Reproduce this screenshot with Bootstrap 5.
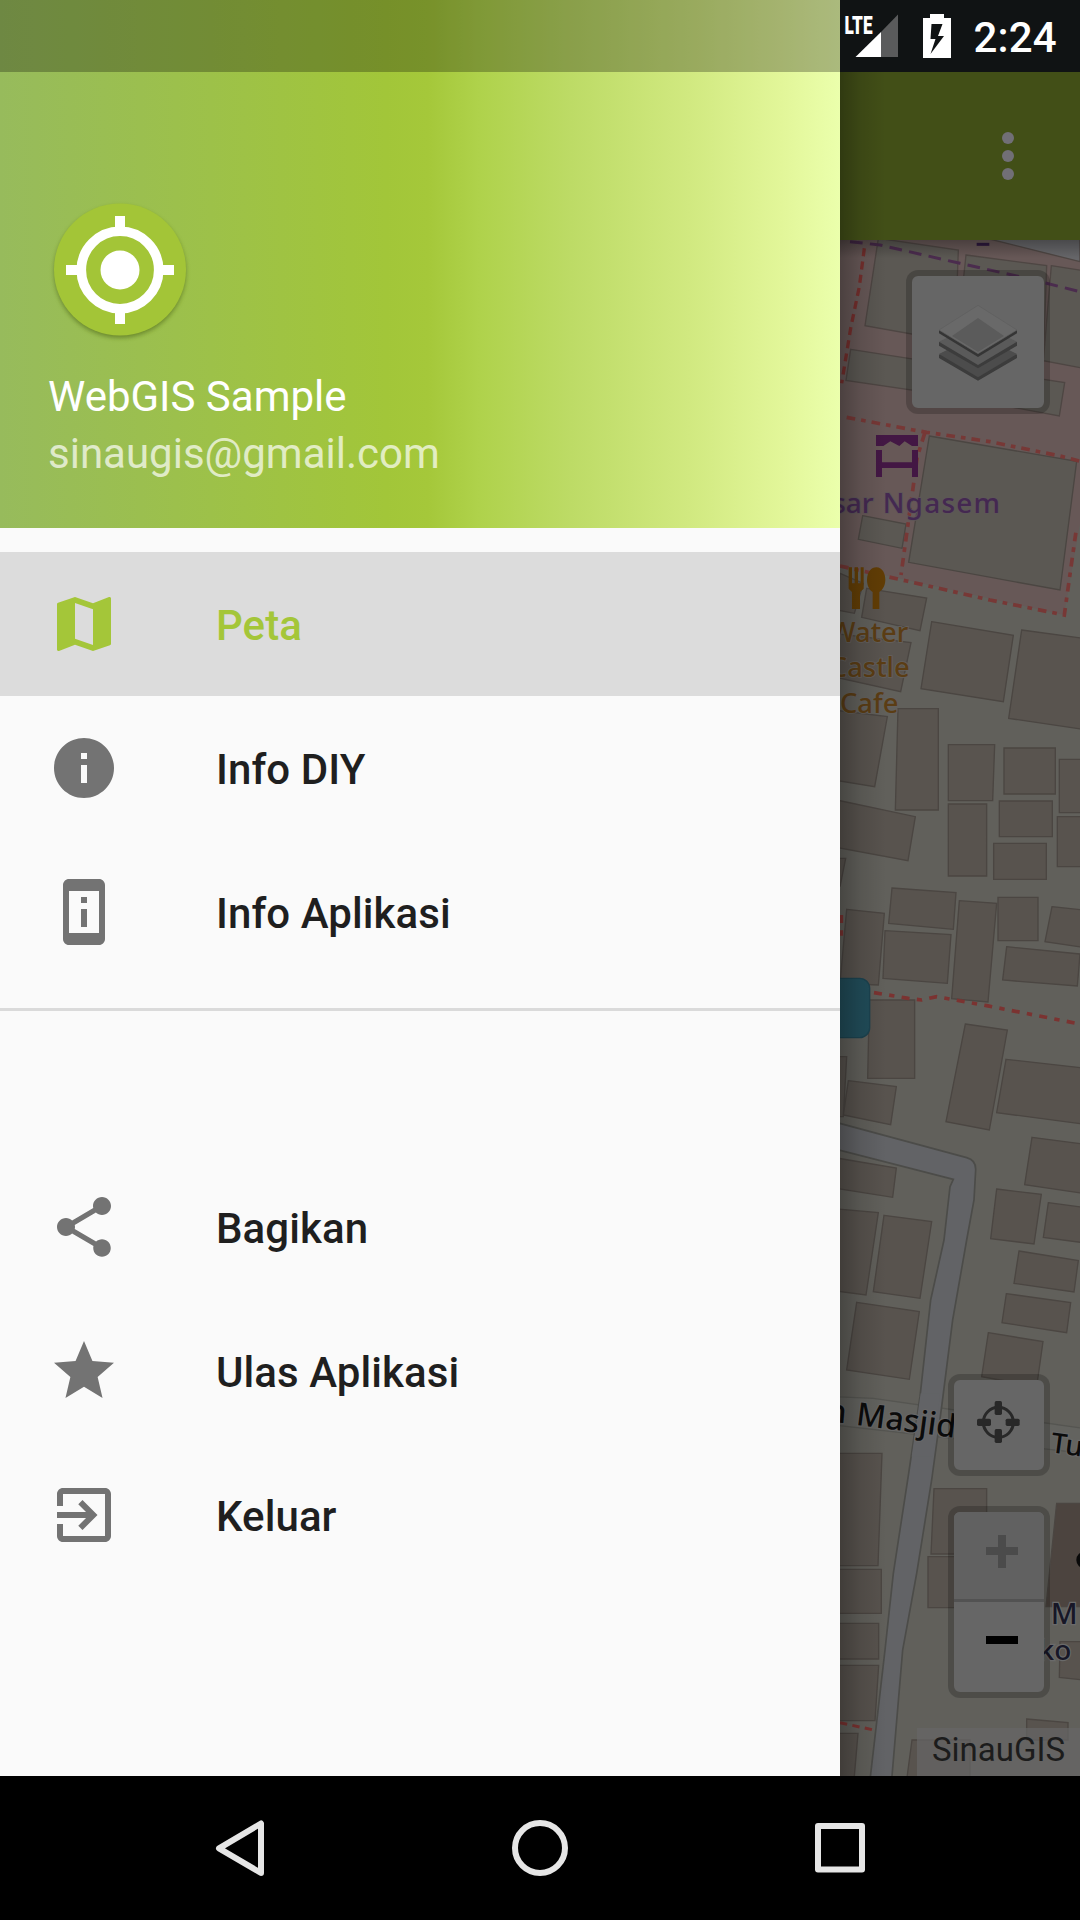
<!DOCTYPE html>
<html lang="id">
<head>
<meta charset="utf-8">
<meta name="viewport" content="width=device-width, initial-scale=1">
<title>WebGIS Sample</title>
<link href="https://cdn.jsdelivr.net/npm/bootstrap@5.3.0/dist/css/bootstrap.min.css" rel="stylesheet">
<style>
  body { font-family: Roboto, "Liberation Sans", sans-serif; background: #000; }
  .phone { width: 1080px; height: 1920px; }
  .stage { height: 1776px; }
  .statusbar { height: 72px; background: #101314; }
  .statusbar svg { width: 240px; height: 72px; }
  .toolbar-app { height: 168px; background: #424f17; }
  .toolbar-app svg { width: 144px; height: 168px; }
  .map-svg { width: 1080px; height: 1536px; }
  .drawer { width: 840px; height: 1776px; background: #fafafa; }
  .drawer-shade { left: 840px; top: 72px; width: 46px; height: 1704px;
    background: linear-gradient(90deg, rgba(0,0,0,.27), rgba(0,0,0,.1) 45%, rgba(0,0,0,0)); }
  .drawer-head { height: 528px; padding: 0 48px 46px;
    background: linear-gradient(90deg, #97bb5c 0, #a2c639 46%, #a5c83a 51%, #afd24b 57%, #bddb66 68%, #d1e980 82%, #e2f699 93%, #ebffac 100%); }
  .drawer-status { height: 72px; background: rgba(0,0,0,.27); }
  .logo-app { width: 144px; height: 144px; }
  .acct-lines { padding-top: 24px; }
  .acct { font-size: 42px; line-height: 57px; color: #fff; }
  .acct-mail { color: rgba(255,255,255,.7); }
  .menu-item { height: 144px; padding: 0 48px; gap: 96px; font-size: 42px; font-weight: 500; color: #1f1f1f; }
  .menu-item span { padding-top: 2px; letter-spacing: .08px; }
  .menu-item svg { width: 72px; height: 72px; fill: #737373; }
  .menu-item.active { background: #dcdcdc; color: #a4c639; }
  .menu-item.active svg { fill: #a4c639; }
  .menu-rule { height: 3px; margin: 24px 0 144px; background: #dadada; }
  .map-ctl { right: 30px; border: 6px solid rgba(0,0,0,.2); border-radius: 12px; background: #666; background-clip: padding-box; }
  .ctl-layers { top: 30px; width: 144px; height: 144px; }
  .ctl-locate { top: 1134px; width: 102px; height: 102px; }
  .ctl-zoom { top: 1266px; width: 102px; height: 192px; }
  .zoom-in { height: 90px; border-bottom: 3px solid #525252; background: #616161; border-radius: 6px 6px 0 0; }
  .attrib { right: 0; bottom: 0; height: 48px; padding: 0 15px; font-size: 33px; line-height: 43px; color: #1c1c1c; background: rgba(102,102,102,.7); }
  .navkeys { height: 144px; background: #000; }
</style>
</head>
<body>
<div class="phone d-flex flex-column overflow-hidden">
  <div class="stage position-relative overflow-hidden d-flex flex-column">
    <div class="statusbar d-flex justify-content-end flex-shrink-0">
      <svg viewBox="840 0 240 72">
        <text x="844.500" y="33.500" font-size="26.500" font-weight="900" fill="#fff" textLength="28" lengthAdjust="spacingAndGlyphs">LTE</text>
        <path d="M898 14.500V57h-17V32z" fill="#5a5b5c"/>
        <path d="M881 32v25h-25.500z" fill="#fff"/>
        <path fill="#fff" fill-rule="evenodd" d="M923 18h7v-4h14v4h7v40h-28zM931.500 24l-1 15h5l-5 15 13.500-18h-6l4.500-12z"/>
        <text x="973.500" y="51.700" font-size="42" font-weight="500" fill="#fff" textLength="83">2:24</text>
      </svg>
    </div>
    <div class="toolbar-app d-flex justify-content-end flex-shrink-0">
      <svg viewBox="936 72 144 168" fill="#716f76"><circle cx="1008" cy="138" r="6"/><circle cx="1008" cy="156" r="6"/><circle cx="1008" cy="174" r="6"/></svg>
    </div>
    <div class="position-relative">
      <svg class="map-svg d-block" viewBox="0 240 1080 1536">
        <defs>
          <linearGradient id="barShade" x1="0" y1="0" x2="0" y2="1"><stop offset="0" stop-opacity=".28"/><stop offset="1" stop-opacity="0"/></linearGradient>
        </defs>
        <rect y="240" width="1080" height="1536" fill="#61605b"/>
        <!-- market area -->
        <path d="M830 240H1080V524L1064 615 830 563z" fill="#675857"/>
        <g transform="translate(830 0) scale(.33333)" fill="#5b5853" stroke="#4e4643" stroke-width="4">
          <path d="M470 715L750 785V715z" fill="#666669"/>
          <path d="M145 715L385 750 375 1025 105 977z"/>
          <path d="M408 765L650 797 640 1085 380 1030z"/>
          <path d="M664 797L760 812V1105L640 1082z"/>
          <path d="M62 1048L704 1148 688 1248 380 1190 48 1141z"/>
          <g fill="none" stroke-width="7">
            <path d="M60 725L150 735 390 790 570 830 750 875" stroke="#4b2c4e" stroke-dasharray="38 22" stroke-width="9"/>
            <path d="M103 745L88 860 62 985 35 1150" stroke="#752f2d" stroke-dasharray="24 16" stroke-width="10"/>
            <path d="M440 733H478" stroke="#2d183d" stroke-width="9"/>
          </g>
        </g>
        <g transform="translate(830 400) scale(.33333)" fill="#59544f" stroke="#4b4642" stroke-width="4">
          <path d="M298 108L740 184 690 570 236 487z" fill="#5b5853"/>
          <path d="M98 347L228 372 216 445 85 418z" fill="#5b5853"/>
          <path d="M30 520L100 550 73 640 20 630z"/>
          <path d="M110 565L290 594 270 692 95 652z"/>
          <path d="M10 700L243 728 212 875 10 830z"/>
          <path d="M305 665L550 706 520 905 273 866z"/>
          <path d="M575 690L760 715V988L536 955z"/>
          <path d="M10 930L172 950 134 1160 10 1140z"/>
          <path d="M204 926H325V1230H196z"/>
          <path d="M355 1034H494L488 1202H355zM522 1044H676V1182H522zM688 1078H760V1238H688z"/>
          <g fill="none" stroke="#773836" stroke-width="11" stroke-dasharray="26 18 14 18">
            <path d="M50 52L250 90 290 97 480 125 690 168 755 185"/>
            <path d="M284 100L262 170 213 525"/>
            <path d="M30 498L230 543 480 600 703 645 740 380"/>
          </g>
          <path d="M138 105H264V138H246L224 124 208 138 181 124 160 138H138zM138 150H156V187H246V150H264V231H246V204H156V231H138z" fill="#431744" stroke="none"/>
          <path d="M56 502h10v48h8v-48h10v48h8v-48h9v64l-11 10v51H66v-51l-10-10zM139 502C158 502 166 522 166 539 166 561 154 571 148 576V627H128V576C117 569 111 555 111 539 112 515 124 502 139 502z" fill="#613d05" stroke="none"/>
          <g stroke="#64615f" stroke-width="5" paint-order="stroke" text-anchor="end" font-family="Noto Sans, Open Sans, sans-serif" font-size="84" font-weight="500">
            <g fill="#442851" stroke="#5d5659"><text x="131" y="340">Pasar</text><text x="510" y="340" textLength="352">Ngasem</text></g>
            <g fill="#5b3d14" font-size="82"><text x="235" y="725">Water</text><text x="239" y="832">Castle</text><text x="205" y="940">Cafe</text></g>
          </g>
        </g>
        <g transform="translate(830 800) scale(.33333)" fill="#58534e" stroke="#4b4642" stroke-width="4">
          <path d="M20 0L256 50 234 182 20 142zM20 175H47L30 260z"/>
          <path d="M355 12H470V228H355zM508 3H667V110H508zM491 130H649V238H491zM682 50H760V200H682z"/>
          <path d="M186 264L378 278 370 388 176 370zM165 392L363 404 352 550 159 535zM388 302L500 310 474 606 365 596z"/>
          <path d="M504 292H624V422H504zM666 320L760 330V442L645 425zM530 440L750 462 742 558 518 540z"/>
          <path d="M50 328L163 340 145 555 30 550zM118 600H254V835H113z"/>
          <path d="M406 672L532 690 478 990 348 965zM528 778L760 804V972L500 938z"/>
          <path d="M20 770H50L40 950H20zM55 842L199 860 182 974 40 945z"/>
          <path d="M606 1012L760 1032V1180L584 1154zM20 1074L199 1104 188 1192 20 1165z"/>
          <g fill="none" stroke="#7b3331" stroke-width="11" stroke-dasharray="24 22 16 22">
            <path d="M132 578L235 595 275 600 320 590 470 617 750 672"/><path d="M34 345V410"/>
          </g>
          <rect x="-60" y="535" width="179" height="178" rx="30" fill="#214d5a" stroke="#1c4350"/>
        </g>
        <g transform="translate(830 1180) scale(.33333)" fill="#58534e" stroke="#4b4642" stroke-width="4">
          <path d="M10 650L130 655 760 745V820L10 735z" fill="#63635f" stroke="#555551"/>
          <!-- lane running down from the upper left -->
          <path d="M10 -175L410 -67Q438 -60 437 -30L432 60 410 180 368 420 335 680 305 900 260 1180 218 1410 185 1800H120L165 1410 190 1180 236 880 270 650 302 360 342 180 360 20 370 -2 10 -94z" transform="translate(0 0)" fill="#626366" stroke="#4c4c49" stroke-width="5"/>
          <path d="M272 640H330L308 830H245z" fill="#626366" stroke="none"/>
          <path d="M10 86L145 98 108 345 10 332zM162 106L305 125 270 355 130 335zM80 367L268 395 238 598 50 570z"/>
          <path d="M500 27L634 43 612 192 482 176zM655 68L760 82V188L640 172zM567 213L745 242 732 336 552 310zM529 341L722 368 710 458 516 428zM475 458L639 485 620 620 455 590z"/>
          <path d="M10 820H156L144 1157H10zM10 1168H154V1300H10zM10 1330H146V1437H10zM10 1456H146L135 1622H10zM10 1660H84L72 1800H10z"/>
          <path d="M312 926H470V1122H303zM294 1130H430V1283H294z"/>
          <path d="M680 970H760V1280H648z" fill="#4c443f"/>
          <path d="M690 1385H760V1500L688 1492zM590 1617L714 1628V1680H590zM246 1680H420V1800H230z"/>
          <path d="M30 1628L140 1652" fill="none" stroke="#7b3331" stroke-width="9" stroke-dasharray="22 16"/>
          <circle cx="764" cy="1140" r="25" fill="#090909" stroke="none"/>
          <g fill="#0b0b0b" stroke="#686868" stroke-width="7" paint-order="stroke" font-family="Noto Sans, Open Sans, sans-serif" font-size="96" font-weight="500">
            <text transform="translate(76 734) rotate(7.500)">Masjid</text>
            <text transform="translate(47 730) rotate(5)" text-anchor="end">Jalan</text>
            <text transform="translate(660 817) rotate(7.500)" font-size="84">Tu</text>
            <g fill="#171727" stroke="#6a6a6a"><text x="662" y="1333" font-size="88">M</text><text x="724" y="1440" text-anchor="end" font-size="84">Toko</text></g>
          </g>
        </g>
        <rect y="240" width="1080" height="18" fill="url(#barShade)"/>
      </svg>
      <div class="map-ctl ctl-layers position-absolute">
        <svg class="d-block" width="132" height="132" viewBox="246 828 396 396">
          <path d="M327 1064l15-7 102 60 102-60 15 7v10l-117 68-117-68z" fill="#3c3c3c"/><path d="M327 1062l117-58 117 58-117 70z" fill="#4c4c4c"/>
          <path d="M327 1027l15-7 102 62 102-62 15 7v10l-117 68-117-68z" fill="#3c3c3c"/><path d="M327 1025l117-58 117 58-117 70z" fill="#5a5a5a"/>
          <path d="M327 990v10l117 71 117-71v-10z" fill="#353535"/><path d="M444 916l117 74-117 71-117-71z" fill="#696969" stroke="#5e5e5e" stroke-width="2"/><path d="M444 954l78 54-78 48-78-48z" fill="#5b5b5b"/>
        </svg>
      </div>
      <div class="map-ctl ctl-locate position-absolute">
        <svg class="d-block" width="90" height="90" viewBox="372 600 270 270" fill="#282828"><circle cx="505" cy="727" r="45" fill="none" stroke="#282828" stroke-width="9"/><rect x="494" y="663" width="22" height="42" rx="5"/><rect x="494" y="747" width="22" height="42" rx="5"/><rect x="441" y="716" width="42" height="22" rx="5"/><rect x="527" y="716" width="42" height="22" rx="5"/></svg>
      </div>
      <div class="map-ctl ctl-zoom position-absolute">
        <div class="zoom-in"><svg class="d-block" width="90" height="84" viewBox="0 0 90 84"><path d="M32 39h32M48 23v33" stroke="#4b4b4b" stroke-width="8" fill="none"/></svg></div>
        <svg class="d-block" width="90" height="90" viewBox="0 0 90 90"><path d="M32 38h32" stroke="#000" stroke-width="8"/></svg>
      </div>
      <div class="attrib position-absolute">SinauGIS</div>
    </div>

    <div class="drawer-shade position-absolute"></div>
    <nav class="drawer position-absolute top-0 start-0">
      <div class="drawer-head d-flex flex-column justify-content-end position-relative">
        <div class="drawer-status position-absolute top-0 start-0 w-100"></div>
        <svg class="logo-app" viewBox="48 200 144 144">
          <defs><filter id="soft" x="-20%" y="-20%" width="140%" height="140%"><feGaussianBlur stdDeviation="2"/></filter></defs>
          <circle cx="120" cy="272" r="66" fill="#54701c" opacity=".65" filter="url(#soft)"/>
          <circle cx="120" cy="269.500" r="66" fill="#a3c537"/>
          <circle cx="120" cy="270" r="38.700" fill="none" stroke="#fff" stroke-width="9.600"/>
          <circle cx="120" cy="270" r="19.500" fill="#fff"/>
          <path d="M120 216v14M120 310v14M66 270h14M160 270h14" stroke="#fff" stroke-width="10"/>
        </svg>
        <div class="acct-lines"><div class="acct">WebGIS Sample</div><div class="acct acct-mail">sinaugis@gmail.com</div></div>
      </div>
      <div class="pt-4">
        <a class="menu-item active d-flex align-items-center text-decoration-none"><svg viewBox="0 0 24 24"><path d="M20.500 3l-.16.03L15 5.100 9 3 3.360 4.900c-.21.07-.36.25-.36.48V20.500c0 .28.22.5.5.5l.16-.03L9 18.900l6 2.100 5.640-1.900c.21-.07.36-.25.36-.48V3.500c0-.28-.22-.5-.5-.5zM15 19l-6-2.110V5l6 2.110V19z"/></svg><span>Peta</span></a>
        <a class="menu-item d-flex align-items-center text-decoration-none"><svg viewBox="0 0 24 24"><path d="M12 2C6.480 2 2 6.480 2 12s4.480 10 10 10 10-4.480 10-10S17.520 2 12 2zm1 15h-2v-6h2v6zm0-8h-2V7h2v2z"/></svg><span>Info DIY</span></a>
        <a class="menu-item d-flex align-items-center text-decoration-none"><svg viewBox="0 0 24 24"><path d="M13 7h-2v2h2V7zm0 4h-2v6h2v-6zm4-9.990L7 1c-1.100 0-2 .9-2 2v18c0 1.100.9 2 2 2h10c1.100 0 2-.9 2-2V3c0-1.100-.9-1.990-2-1.990zM17 19H7V5h10v14z"/></svg><span>Info Aplikasi</span></a>
      </div>
      <div class="menu-rule"></div>
      <a class="menu-item d-flex align-items-center text-decoration-none"><svg viewBox="0 0 24 24"><path d="M18 16.080c-.76 0-1.440.3-1.960.77L8.910 12.700c.05-.23.09-.46.09-.7s-.04-.47-.09-.7l7.050-4.110c.54.5 1.250.81 2.040.81 1.660 0 3-1.340 3-3s-1.340-3-3-3-3 1.340-3 3c0 .24.04.47.09.7L8.040 9.810C7.500 9.310 6.790 9 6 9c-1.660 0-3 1.340-3 3s1.340 3 3 3c.79 0 1.500-.31 2.040-.81l7.120 4.160c-.05.21-.08.43-.08.65 0 1.610 1.310 2.920 2.920 2.920s2.920-1.310 2.920-2.920-1.310-2.920-2.920-2.920z"/></svg><span>Bagikan</span></a>
      <a class="menu-item d-flex align-items-center text-decoration-none"><svg viewBox="0 0 24 24"><path d="M12 17.270L18.180 21l-1.640-7.030L22 9.240l-7.190-.61L12 2 9.190 8.630 2 9.240l5.460 4.730L5.820 21z"/></svg><span>Ulas Aplikasi</span></a>
      <a class="menu-item d-flex align-items-center text-decoration-none"><svg viewBox="0 0 24 24"><path d="M10.090 15.590L11.500 17l5-5-5-5-1.410 1.410L12.670 11H3v2h9.670l-2.580 2.590zM19 3H5c-1.110 0-2 .9-2 2v4h2V5h14v14H5v-4H3v4c0 1.100.89 2 2 2h14c1.100 0 2-.9 2-2V5c0-1.100-.9-2-2-2z"/></svg><span>Keluar</span></a>
    </nav>
  </div>

  <div class="navkeys flex-shrink-0">
    <svg class="d-block" width="1080" height="144" viewBox="0 1776 1080 144" fill="none" stroke="#e6e6e6" stroke-width="6" stroke-linejoin="round">
      <path d="M261 1823.500V1873L219 1848.300z"/><circle cx="540" cy="1848" r="25"/><rect x="818" y="1826" width="44" height="43.500"/>
    </svg>
  </div>
</div>
<script src="https://cdn.jsdelivr.net/npm/bootstrap@5.3.0/dist/js/bootstrap.bundle.min.js"></script>
</body>
</html>
